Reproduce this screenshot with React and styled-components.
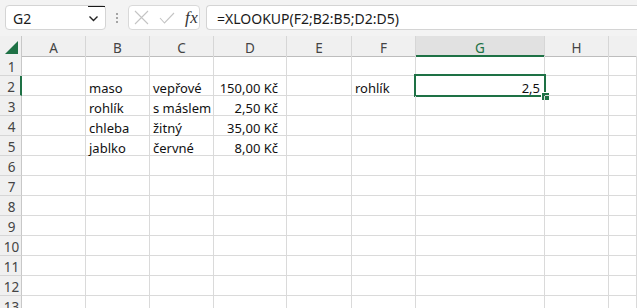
import React from 'react';
import styled, { createGlobalStyle, css } from 'styled-components';

const GREEN = '#1e7145';

const GlobalStyle = createGlobalStyle`
  html, body {
    margin: 0;
    padding: 0;
    background: #ffffff;
    overflow: hidden;
  }
  * { box-sizing: border-box; }
`;

const Page = styled.div`
  width: 637px;
  height: 308px;
  overflow: hidden;
  font-family: "Noto Sans", "Open Sans", sans-serif;
  background: #fff;
`;

const Toolbar = styled.div`
  height: 36px;
  background: #f3f3f3;
  display: flex;
  align-items: flex-start;
  padding: 5px 0 0 5px;
`;

const NameBox = styled.div`
  position: relative;
  width: 101px;
  height: 25px;
  background: #fff;
  border: 1px solid #d4d4d4;
  border-radius: 4px;
  display: flex;
  align-items: center;
  justify-content: space-between;
  padding: 1px 6px 0 7px;
  font-size: 14px;
  color: #1a1a1a;

  &::before {
    content: '';
    position: absolute;
    left: 82px;
    top: 0;
    width: 17px;
    height: 1px;
    background: #1a1a1a;
  }
`;

const Dots = styled.div`
  width: 22px;
  height: 25px;
  display: flex;
  flex-direction: column;
  align-items: center;
  justify-content: center;
  gap: 2px;

  span {
    width: 2px;
    height: 2px;
    border-radius: 1px;
    background: #8a8a8a;
  }
`;

const FxBox = styled.div`
  width: 72px;
  height: 25px;
  background: #fff;
  border: 1px solid #d9d9d9;
  border-radius: 4px;
  display: flex;
  align-items: center;
  padding: 0 0 0 5px;
  gap: 10px;
`;

const FxLabel = styled.span`
  font-family: "Liberation Serif", "DejaVu Serif", serif;
  font-style: italic;
  font-size: 17px;
  color: #333;
  letter-spacing: 0.5px;
`;

const FormulaInput = styled.div`
  flex: 1;
  margin-left: 6px;
  height: 25px;
  background: #fff;
  border: 1px solid #d4d4d4;
  border-right: none;
  border-radius: 4px 0 0 4px;
  display: flex;
  align-items: center;
  padding: 1px 0 0 10px;
  font-size: 14px;
  color: #1a1a1a;
`;

const Grid = styled.div`
  display: grid;
  grid-template-columns: 22px 64px 64px 64px 73px 65px 64px 129px 64px 1fr;
  grid-auto-rows: 20px;
`;

const Corner = styled.div`
  height: 21px;
  background: #f0f0f0;
  border-right: 1px solid #c8c8c8;
  border-bottom: 1px solid #bdbdbd;
  display: flex;
  align-items: flex-end;
  justify-content: flex-end;
  padding: 0 3px 2px 0;
`;

const ColHeader = styled.div`
  height: 21px;
  background: ${p => (p.$active ? '#e1e1e1' : '#f0f0f0')};
  color: ${p => (p.$active ? GREEN : '#444')};
  border-right: 1px solid ${p => (p.$last ? 'transparent' : '#d6d6d6')};
  border-bottom: ${p => (p.$active ? `2px solid ${GREEN}` : '1px solid #bdbdbd')};
  font-size: 13.5px;
  display: flex;
  align-items: center;
  justify-content: center;
  padding-top: 4px;
`;

const RowHeader = styled.div`
  background: #f0f0f0;
  color: #444;
  border-right: ${p => (p.$active ? `2px solid ${GREEN}` : '1px solid #c8c8c8')};
  border-bottom: 1px solid #d6d6d6;
  font-size: 13.5px;
  display: flex;
  align-items: center;
  justify-content: center;
  padding: 3px 0 0 2px;
`;

const Cell = styled.div`
  position: relative;
  border-right: 1px solid #dadada;
  border-bottom: 1px solid #dadada;
  font-size: 13px;
  color: #111;
  display: flex;
  align-items: center;
  white-space: nowrap;
  padding: 4px 3px 0 3px;
  ${p => p.$num && css`
    justify-content: flex-end;
    padding-right: ${p.$pad || 4}px;
  `}
`;

const Selection = styled.div`
  position: absolute;
  left: -2px;
  top: -2px;
  right: -2px;
  bottom: -2px;
  border: 2px solid ${GREEN};
  pointer-events: none;

  &::after {
    content: '';
    position: absolute;
    right: -5px;
    bottom: -5px;
    width: 7px;
    height: 7px;
    background: ${GREEN};
    border-left: 1px solid #fff;
    border-top: 1px solid #fff;
  }
`;

const columns = ['A', 'B', 'C', 'D', 'E', 'F', 'G', 'H', ''];

const data = {
  2: { B: 'maso', C: 'vepřové', D: '150,00 Kč', F: 'rohlík', G: '2,5' },
  3: { B: 'rohlík', C: 's máslem', D: '2,50 Kč' },
  4: { B: 'chleba', C: 'žitný', D: '35,00 Kč' },
  5: { B: 'jablko', C: 'červné', D: '8,00 Kč' },
};

const numeric = { D: 8, G: 4 };

const Chevron = () => (
  <svg width="11" height="7" viewBox="0 0 11 7">
    <path d="M1.5 1.5 L5.5 5.5 L9.5 1.5" fill="none" stroke="#222" strokeWidth="1.4" />
  </svg>
);

const CancelIcon = () => (
  <svg width="15" height="15" viewBox="0 0 15 15">
    <path d="M1 1 L14 14 M14 1 L1 14" stroke="#c4c4c4" strokeWidth="1.1" />
  </svg>
);

const CheckIcon = () => (
  <svg width="16" height="12" viewBox="0 0 16 12">
    <path d="M1 6 L5.5 11 L15 1" fill="none" stroke="#c4c4c4" strokeWidth="1.1" />
  </svg>
);

const CornerTriangle = () => (
  <svg width="13" height="13" viewBox="0 0 13 13">
    <path d="M13 0 L13 13 L0 13 Z" fill={GREEN} />
  </svg>
);

export default function App() {
  const rows = Array.from({ length: 13 }, (_, i) => i + 1);
  return (
    <Page>
      <GlobalStyle />
      <Toolbar>
        <NameBox>
          <span>G2</span>
          <Chevron />
        </NameBox>
        <Dots>
          <span />
          <span />
          <span />
        </Dots>
        <FxBox>
          <CancelIcon />
          <CheckIcon />
          <FxLabel>fx</FxLabel>
        </FxBox>
        <FormulaInput>=XLOOKUP(F2;B2:B5;D2:D5)</FormulaInput>
      </Toolbar>
      <Grid>
        <Corner>
          <CornerTriangle />
        </Corner>
        {columns.map((c, i) => (
          <ColHeader key={i} $active={c === 'G'} $last={i === columns.length - 1}>
            {c}
          </ColHeader>
        ))}
        {rows.map(r => (
          <React.Fragment key={r}>
            <RowHeader $active={r === 2}>{r}</RowHeader>
            {columns.map((c, i) => {
              const value = data[r] && data[r][c];
              return (
                <Cell key={i} $num={numeric[c] !== undefined} $pad={numeric[c]}>
                  {value}
                  {r === 2 && c === 'G' && <Selection />}
                </Cell>
              );
            })}
          </React.Fragment>
        ))}
      </Grid>
    </Page>
  );
}
